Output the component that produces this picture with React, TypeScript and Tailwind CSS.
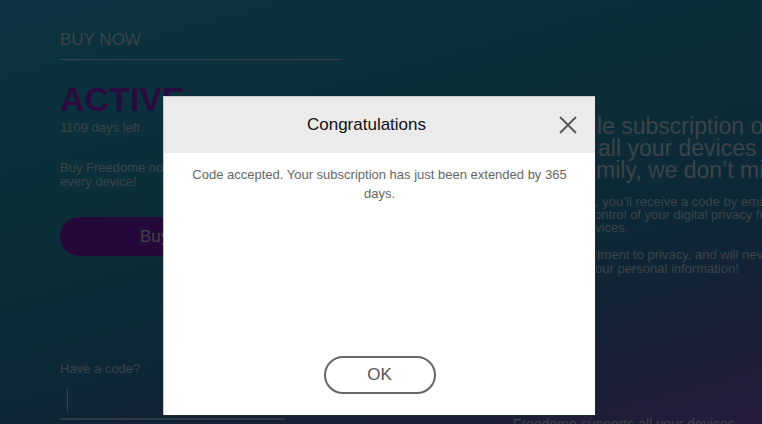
import React from "react";

const dim = "text-[#3c4447]";

const CloseIcon = () => (
  <svg width="18" height="18" viewBox="0 0 18 18" fill="none" stroke="#555" strokeWidth="1.8" strokeLinecap="round">
    <path d="M1.5 1.5 L16.5 16.5 M16.5 1.5 L1.5 16.5" />
  </svg>
);

// a line of the right column; the head sits in a fixed box (it is behind the dialog)
const Line = ({ head, rest, box }: { head: string; rest: string; box: string }) => (
  <span className="block">
    <span className={`inline-block align-top overflow-hidden text-right ${box}`}>{head}</span>
    {rest}
  </span>
);

export default function App() {
  return (
    <div
      className="relative w-[762px] h-[424px] overflow-hidden bg-[linear-gradient(165deg,#0c3241_0%,#0b2f39_35%,#0d2736_65%,#1a1f37_85%,#261c3b_100%)]"
      style={{ fontFamily: '"Liberation Sans", Arial, sans-serif' }}
    >
      {/* page behind the dialog */}
      <div className="flex pl-[60px]">
        {/* left column */}
        <div className="w-[281px] shrink-0 flex flex-col">
          <div className="pt-[30px] pb-[9px] border-b border-[#34444a]">
            <div className={`text-[17px] leading-[20px] ${dim}`}>BUY NOW</div>
          </div>
          <div className="mt-[22px] text-[34px] leading-[35px] font-bold text-[#2a0b3f]">ACTIVE</div>
          <div className={`mt-[3px] text-[13px] leading-[15px] ${dim}`}>1109 days left</div>
          <p className={`mt-[26px] text-[13px] leading-[14px] whitespace-nowrap ${dim}`}>
            Buy Freedome now and protect yourself on
            <br />
            every device!
          </p>
          <button className="mt-[28px] w-[225px] h-[39px] rounded-full bg-[#25083a] text-[17px] text-[#3f4446]">
            Buy now
          </button>
          <div className={`mt-[105px] text-[13px] leading-[15px] ${dim}`}>Have a code?</div>
          <div className="mt-[6px] w-[225px] h-[38px] flex items-center pl-[7px] border-b-2 border-[#2c3a42]">
            <div className="w-px h-[22px] bg-[#3e4649]" />
          </div>
        </div>

        {/* right column */}
        <div className="ml-[172px] pt-[115px] whitespace-nowrap">
          <h2 className={`text-[23px] leading-[22px] ${dim}`}>
            <Line box="w-[84px]" head="A simp" rest="le subscription on" />
            <Line box="w-[85px]" head={"Cover\u00a0"} rest="all your devices (or" />
            <Line box="w-[83px]" head="your fa" rest="mily, we don’t mind)" />
          </h2>
          <p className={`mt-[14px] text-[13px] leading-[13px] ${dim}`}>
            <Line box="w-[82px]" head="Once bought" rest=", you’ll receive a code by email" />
            <Line box="w-[81px]" head="Take full c" rest="ontrol of your digital privacy for" />
            <Line box="w-[82px]" head="all your de" rest="vices." />
          </p>
          <p className={`mt-[14px] text-[13px] leading-[14px] ${dim}`}>
            <Line box="w-[84px]" head="Our commi" rest="tment to privacy, and will never" />
            <Line box="w-[82px]" head="or share y" rest="our personal information!" />
          </p>
          <div className={`mt-[140px] text-[14px] leading-[16px] ${dim}`}>Freedome supports all your devices</div>
        </div>
      </div>

      {/* dialog */}
      <div className="absolute left-[163px] top-[96px] w-[432px] h-[319px] bg-white flex flex-col border-t border-l border-[#c4cacd] shadow-[1px_1px_0_#1c2a33]">
        <div className="relative h-[56px] shrink-0 bg-[#ebebeb] flex items-center justify-center pr-[26px]">
          <span className="text-[17px] text-[#111]">Congratulations</span>
          <button className="absolute right-[18px] top-[19px]" aria-label="Close">
            <CloseIcon />
          </button>
        </div>
        <p className="pt-[12px] px-[20px] text-center text-[13px] leading-[19px] text-[#666]">
          Code accepted. Your subscription has just been extended by 365 days.
        </p>
        <div className="mt-auto mb-[21px] flex justify-center">
          <button className="w-[112px] h-[38px] rounded-full border-2 border-[#666] text-[17px] text-[#555]">
            OK
          </button>
        </div>
      </div>
    </div>
  );
}
